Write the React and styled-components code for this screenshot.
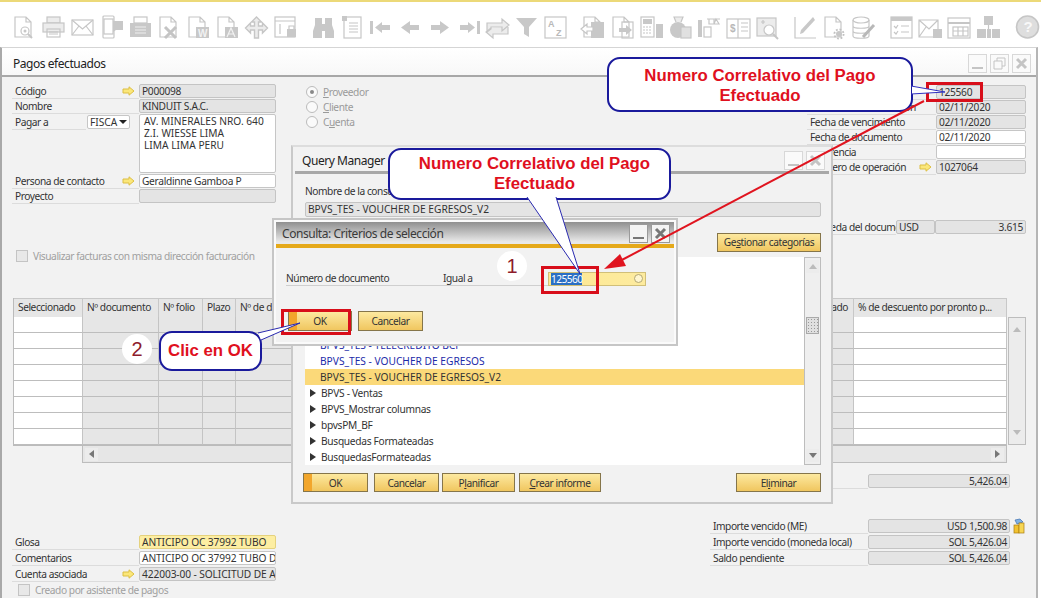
import React from 'react';
import styled, { createGlobalStyle } from 'styled-components';

const Global = createGlobalStyle`
  html, body { margin: 0; padding: 0; background: #fff; }
  body { font-family: "Noto Sans", "Liberation Sans", sans-serif; font-size: 10.2px; line-height: 14px; letter-spacing: -0.45px; color: #333; }
  * { box-sizing: border-box; }
`;

const Page = styled.div`
  position: relative; width: 1041px; height: 598px; overflow: hidden; background: #fff;
  border-top: 2px solid #ecd978;
`;

const Toolbar = styled.div`
  display: flex; align-items: center; height: 45px; padding: 5px 0 0 10px;
`;
const ToolGroup = styled.div`
  display: flex; margin-right: ${p => p.$gap ?? 9}px;
`;
const ToolSvg = styled.svg`
  width: 29px; height: 26px; flex: none; fill: none; stroke: #c6c6c6; stroke-width: 1.2;
  .f { fill: #c8c8c8; stroke: none; }
  .l { fill: #ececec; }
  text { fill: #b8b8b8; stroke: none; font-family: "Liberation Sans", sans-serif; font-weight: 700; letter-spacing: 0; }
`;

const page = "M5 3h11l5 5v15H5z M16 3v5h5";
const icons = [
  <><path d={page}/><circle cx="15" cy="17" r="4"/><circle cx="15" cy="17" r="1.5" className="f"/><path d="M18 20l4 4" strokeWidth="2"/></>,
  <><rect x="8" y="3" width="13" height="6" className="l"/><rect x="4" y="9" width="21" height="9" className="l"/><rect x="8" y="15" width="13" height="8"/><path d="M10 18h9M10 20h9"/></>,
  <><rect x="4" y="6" width="21" height="15"/><path d="M4 6l10.5 9L25 6M4 21l7-9M25 21l-7-9"/></>,
  <><rect x="6" y="2" width="11" height="22" rx="1"/><rect x="7" y="5" width="9" height="15" fill="#fff"/><path d="M16 7h10v9h-7l-3 2z" className="f"/></>,
  <><rect x="8" y="3" width="13" height="6"/><rect x="4" y="9" width="21" height="14" className="f"/><path d="M9 13h11M9 16h11M9 19h11" stroke="#eee"/></>,
  <><path d={page}/><path d="M10 13l11 11M21 13L10 24" strokeWidth="3" stroke="#c4c4c4"/></>,
  <><path d={page}/><rect x="12" y="13" width="13" height="11" className="f"/><text x="14" y="23" fontSize="10" style={{fill:'#f2f2f2'}}>W</text></>,
  <><path d={page}/><rect x="12" y="13" width="13" height="11" className="f"/><path d="M14 23l4-9 4 9M15 20h6" stroke="#f2f2f2"/></>,
  <><path d="M14.5 3l5 5h-3v4h4V9l5 5-5 5v-3h-4v8h-4v-8h-4v3l-5-5 5-5v3h4V8h-3z" className="l" strokeWidth="1.4"/></>,
  <><rect x="4" y="3" width="20" height="20"/><path d="M4 7h20M9 10v10" /><rect x="16" y="15" width="9" height="8" className="f"/><path d="M18 15v-3h5v3"/></>,
  <><path d="M6 4h7v6h3V4h7v7l2 6v7h-9v-7h-3v7H4v-7l2-6z" className="f"/></>,
  <><rect x="6" y="3" width="17" height="21"/><rect x="4" y="2" width="5" height="5" className="f"/><path d="M11 9h9M11 12h9M11 15h9M11 18h9"/></>,
  <><rect x="3" y="7" width="3" height="13" className="f"/><path d="M8 13.5L15 8v3h8v5h-8v3z" className="f"/></>,
  <><path d="M5 13.5L14 7v4h9v5h-9v4z" className="f"/></>,
  <><path d="M24 13.5L15 7v4H6v5h9v4z" className="f"/></>,
  <><rect x="23" y="7" width="3" height="13" className="f"/><path d="M21 13.5L14 8v3H6v5h8v3z" className="f"/></>,
  <><path d="M4 18V9h15V5l7 6-7 6v-4H8v2z M25 13v7H10v4l-7-6 5-4" className="l"/></>,
  <><path d="M4 4h21l-8 9v10l-5-3v-7z" className="f"/></>,
  <><rect x="4" y="3" width="21" height="21"/><text x="7" y="13" fontSize="9">A</text><text x="15" y="22" fontSize="9">Z</text></>,
  <><path d={page}/><rect x="12" y="8" width="13" height="16" className="f"/><path d="M2 15l6-5v3h6v4H8v3z" fill="#fff"/></>,
  <><path d={page}/><rect x="14" y="8" width="11" height="16"/><path d="M24 16l-6-5v3h-7v4h7v3z" className="f"/></>,
  <><rect x="4" y="3" width="13" height="20"/><rect x="6" y="5" width="9" height="5" className="f"/><path d="M6 13h9M6 16h9M6 19h9" strokeDasharray="2 1"/><rect x="19" y="10" width="7" height="14" className="f"/></>,
  <><circle cx="12" cy="16" r="8" className="f"/><path d="M10 8l-2-5h9l-2 5" className="l"/><rect x="15" y="13" width="10" height="11" fill="#e0e0e0"/></>,
  <><rect x="3" y="6" width="4" height="17" className="f"/><rect x="9" y="13" width="7" height="10"/><path d="M12 5h13M19 5v5M14 5v5h6M21 5l-2 5h5z"/></>,
  <><rect x="3" y="5" width="23" height="19"/><path d="M14 5v19M17 9h7M17 13h7M17 17h7"/><text x="6" y="18" fontSize="10">$</text></>,
  <><rect x="4" y="4" width="19" height="18" className="l"/><path d="M8 8h4M10 6v4"/><circle cx="16" cy="16" r="5" fill="#fff"/><path d="M20 20l5 5" strokeWidth="2"/></>,
  <><path d="M4 3v21h21"/><path d="M9 20l3-1 12-13-2-3L10 16z" className="f"/></>,
  <><path d={page}/><circle cx="19" cy="20" r="3" className="f"/><circle cx="19" cy="20" r="4.6" strokeWidth="1.8" strokeDasharray="1.8 1.8" stroke="#c0c0c0"/></>,
  <><ellipse cx="12" cy="6" rx="8" ry="3"/><path d="M4 6v16c0 3 16 3 16 0V6M4 12c0 3 16 3 16 0M4 17c0 3 16 3 16 0"/><path d="M14 23l11-12" strokeWidth="3" stroke="#b8b8b8"/></>,
  <><rect x="4" y="3" width="21" height="21"/><path d="M4 3h21v4H4z" className="f"/><path d="M7 12l2 2 2-3M7 18l2 2 2-3M14 12h8M14 18h8"/></>,
  <><path d="M3 6h19v17H3zM3 6l10 9 9-9M3 23l7-10"/><rect x="17" y="15" width="9" height="9" className="f"/></>,
  <><rect x="3" y="4" width="22" height="20"/><path d="M3 9h22" strokeWidth="2"/><rect x="8" y="13" width="15" height="9"/><path d="M13 13v9M18 13v9M8 17h15"/></>,
  <><rect x="10" y="2" width="9" height="9" className="f"/><rect x="3" y="15" width="9" height="9" className="f"/><rect x="18" y="15" width="8" height="9" className="f"/><rect x="13" y="15" width="4" height="9" className="f"/><path d="M14.5 11v4"/></>,
  <><circle cx="14.5" cy="13" r="11" strokeWidth="1.6" fill="#dedede"/><text x="10.5" y="18" fontSize="15" style={{fill:'#f8f8f8'}}>?</text></>,
];

const groups = [
  { n: 10, gap: 9 }, { n: 9, gap: 9 }, { n: 7, gap: 9 }, { n: 3, gap: 9 }, { n: 4, gap: 10 }, { n: 1, gap: 0 },
];

const MainWindow = styled.div`
  width: 1038px; height: 551px; background: #f2f2f2;
  border-left: 2px solid #a9a9a9; border-right: 2px solid #b5b5b5; border-top: 1px solid #d5d5d5;
  display: flex; flex-direction: column;
`;
const TitleBar = styled.div`
  display: flex; align-items: center; justify-content: space-between; flex: none;
  height: 29px; padding: 3px 5px 0 11px; background: linear-gradient(#fff, #f8f8f8);
  border-bottom: 2px solid #a8a8a8;
`;
const TitleText = styled.span`
  font-size: 12px; color: ${p => p.$color ?? '#222'}; white-space: nowrap; padding-top: ${p => p.$pt ?? 0}px;
`;
const Controls = styled.div`
  display: flex; gap: 3px;
`;
const Ctl = styled.svg`
  width: 19px; height: 19px; background: ${p => p.$solid ? '#f4f4f4' : '#fafafa'};
  border: 1px solid ${p => p.$solid ? '#9a9a9a' : '#d8d8d8'}; fill: none;
  stroke: ${p => p.$solid ? '#777' : '#c4c4c4'}; stroke-width: 1.6;
`;
const MinIcon = <path d="M3 13h11" strokeWidth="2" />;
const MaxIcon = <path d="M3 6h8v8H3zM6 6V3h8v8h-3" strokeWidth="1" />;
const XIcon = <path d="M4 4l9 9M13 4l-9 9" strokeWidth="3" />;

const Form = styled.div`
  flex: 1; padding: 7px 10px 0 10px; display: flex; flex-direction: column;
`;
const TopRow = styled.div`
  display: flex; height: 214px; flex: none;
`;
const LeftCol = styled.div`
  width: 264px; flex: none; display: flex; flex-direction: column;
`;
const RadioCol = styled.div`
  margin-left: 30px; flex: 1; padding-top: 1px; display: flex; flex-direction: column; gap: 2px;
`;
const Radio = styled.label`
  display: flex; align-items: center; gap: 5px; height: 13px; color: #9a9a9a;
`;
const RadioDot = styled.span`
  width: 12px; height: 12px; border-radius: 50%; border: 1px solid #bbb; background: #fafafa; display: flex;
  align-items: center; justify-content: center;
  &::after { content: ""; width: 4px; height: 4px; border-radius: 50%; background: ${p => p.$on ? '#888' : 'transparent'}; }
`;
const U = styled.span`
  text-decoration: underline;
`;
const RightCol = styled.div`
  width: 219px; flex: none; display: flex; flex-direction: column; padding-top: 1px;
`;
const Row = styled.div`
  display: flex; height: ${p => p.$h ?? 15}px; flex: none; margin-top: ${p => p.$top ?? 0}px;
`;
const Label = styled.div`
  flex: 1; min-width: 0; display: flex; align-items: center; justify-content: space-between;
  border-bottom: 1px solid #dcdcdc; white-space: nowrap; overflow: hidden; padding: 0 4px 1px 3px;
  height: 15px;
`;
const Field = styled.div`
  width: ${p => p.$w ?? 137}px; height: 14px; flex: none; line-height: 12px; padding: 0 2px;
  letter-spacing: ${p => p.$caps ? '-0.1px' : '-0.3px'};
  border: 1px solid ${p => p.$kind === 'white' ? '#c6c6c6' : p.$kind === 'yellow' ? '#e5d27e' : '#c4c4c4'}; border-radius: 2px;
  background: ${p => p.$kind === 'white' ? '#fff' : p.$kind === 'yellow' ? '#fdeea2' : '#e4e4e4'};
  text-align: ${p => p.$right ? 'right' : 'left'}; white-space: nowrap; overflow: hidden; color: #333;
`;
const Lnk = styled.svg`
  width: 13px; height: 10px; flex: none; fill: #fbe77a; stroke: #dcbf45; stroke-width: 1;
`;
const Arrow = () => <Lnk viewBox="0 0 13 10"><path d="M1 3h6V.8L12 5 7 9.2V7H1z" /></Lnk>;
const AddressRow = styled.div`
  display: flex; height: 59px; flex: none; margin-bottom: 1px;
`;
const AddressLabel = styled.div`
  flex: 1; display: flex; align-items: flex-start; justify-content: space-between; padding: 1px 9px 0 0;
`;
const PayLabel = styled.div`
  width: 74px; height: 15px; padding-left: 3px; border-bottom: 1px solid #dcdcdc;
`;
const Select = styled.div`
  width: 43px; height: 14px; background: #fff; border: 1px solid #c6c6c6; border-radius: 2px; padding-left: 2px;
  line-height: 12px; display: flex; justify-content: space-between; align-items: center; padding-right: 2px; letter-spacing: 0;
  &::after { content: ""; border: 4px solid transparent; border-top: 4px solid #222; border-bottom: 0; }
`;
const Address = styled.div`
  width: 137px; height: 59px; background: #fff; border: 1px solid #c6c6c6; border-radius: 2px;
  padding: 0 4px; line-height: 12px; white-space: pre-line; letter-spacing: 0;
`;
const CheckRow = styled.div`
  display: flex; align-items: center; gap: 5px; color: #a0a0a0; white-space: nowrap;
  margin-top: ${p => p.$top ?? 0}px; margin-left: ${p => p.$left ?? 4}px;
`;
const Box = styled.span`
  width: 12px; height: 12px; border: 1px solid #c4c4c4; background: #e8e8e8; flex: none;
`;

const TableWrap = styled.div`
  display: flex; align-items: flex-start; flex: none; margin-left: 1px;
`;
const Grid = styled.div`
  display: grid; width: 994px;
  grid-template-columns: 69px 76px 44px 33px 80px 1fr 110px 153px;
  grid-template-rows: 19px repeat(8, 16px);
  border-left: 1px solid #bbb; border-bottom: 1px solid #bbb;
`;
const Head = styled.div`
  background: #e6e6e6; border-right: 1px solid #c8c8c8; border-top: 1px solid #c8c8c8;
  padding: 1px ${p => p.$right ? 5 : 4}px 0 4px; white-space: nowrap; overflow: hidden; color: #333;
  text-align: ${p => p.$right ? 'right' : 'left'};
`;
const Cell = styled.div`
  background: ${p => p.$open ? '#fff' : '#e6e6e6'}; border-bottom: 1px solid #bdbdbd; border-right: 1px solid #c4c4c4;
`;
const VBar = styled.div`
  width: 18px; height: 128px; background: #ececec; border: 1px solid #bdbdbd; margin-left: 1px; margin-top: 19px;
  display: flex; flex-direction: column; justify-content: space-between; align-items: center; padding: 5px 0;
  flex: none;
`;
const HBar = styled.div`
  width: 925px; height: 17px; margin-left: 70px; flex: none; border: 1px solid #bdbdbd; border-top: 0;
  background: #e6e6e6; display: flex; justify-content: space-between; align-items: center; padding: 0 2px;
`;
const ArrBtn = styled.div`
  width: ${p => p.$w ?? 13}px; height: ${p => p.$h ?? 13}px; background: #ececec; display: flex; align-items: center; justify-content: center;
  &::after {
    content: ""; border: 4px solid transparent;
    ${p => p.$dir === 'left' && 'border-right: 5px solid #777; border-left: 0;'}
    ${p => p.$dir === 'right' && 'border-left: 5px solid #777; border-right: 0;'}
    ${p => p.$dir === 'up' && 'border-bottom: 5px solid #bbb; border-top: 0;'}
    ${p => p.$dir === 'down' && 'border-top: 5px solid #777; border-bottom: 0;'}
    ${p => p.$dir === 'downl' && 'border-top: 5px solid #bbb; border-bottom: 0;'}
  }
`;
const Bottom = styled.div`
  flex: 1; display: flex; justify-content: space-between; padding-right: 16px; align-items: flex-start;
`;
const BottomLeft = styled.div`
  width: 264px; padding-top: 72px; display: flex; flex-direction: column;
`;
const BottomRight = styled.div`
  width: 300px; padding-top: 11px; display: flex; flex-direction: column; position: relative;
`;
const Coins = styled.svg`
  position: absolute; left: 302px; top: 55px; width: 16px; height: 16px;
`;

/* Overlapping windows: free canvas */
const QueryWindow = styled.div`
  position: absolute; left: 291px; top: 143px; width: 542px; height: 359px; background: #f2f2f2;
  border: 2px solid #c9c9c9; border-top-color: #ddd; padding: 0 2px; display: flex; flex-direction: column;
`;
const WinTitle = styled.div`
  flex: none; height: 27px; display: flex; align-items: center; justify-content: space-between;
  border-bottom: 3px solid #a8a8a8; padding: 3px 4px 0 7px;
`;
const QBody = styled.div`
  flex: 1; padding: 10px 8px 0 10px; display: flex; flex-direction: column;
`;
const QField = styled.div`
  height: 15px; background: #e4e4e4; border: 1px solid #c4c4c4; border-radius: 2px; padding: 0 2px; line-height: 13px;
  margin-top: 4px; width: 100%; color: #333; letter-spacing: 0;
`;
const QRow = styled.div`
  display: flex; justify-content: flex-end; gap: 6px; margin-top: 16px; height: 18px; align-items: center;
`;
const GoldBtn = styled.div`
  height: ${p => p.$h ?? 19}px; width: ${p => p.$w}px; margin-left: ${p => p.$ml ?? 0}px;
  display: flex; align-items: center; justify-content: center; flex: none;
  background: linear-gradient(#fde9a0, #f0c65f);
  ${p => p.$default && 'background: linear-gradient(90deg, #f2a62c 8px, transparent 8px), linear-gradient(#fde9a0, #f0c65f);'}
  border: 1px solid #85754a; color: #333; white-space: nowrap;
`;
const ListWrap = styled.div`
  display: flex; height: 208px; margin-top: 6px; flex: none;
`;
const TreeList = styled.div`
  flex: 1; background: #fff; padding-top: 80px; display: flex; flex-direction: column;
`;
const ListItem = styled.div`
  height: 16px; line-height: 15px; padding-left: ${p => p.$tree ? '5px' : '15px'}; display: flex; align-items: center; gap: 5px;
  letter-spacing: ${p => p.$tree ? '-0.3px' : '0'};
  color: ${p => p.$blue ? '#1c2aa8' : '#333'}; background: ${p => p.$sel ? '#fbd979' : 'transparent'}; flex: none;
  &::before { content: ""; display: ${p => p.$tree ? 'block' : 'none'}; border: 4px solid transparent; border-left: 6px solid #333; border-right: 0; }
`;
const QScroll = styled.div`
  width: 17px; background: #efefef; border: 1px solid #bdbdbd; display: flex; flex-direction: column;
  justify-content: space-between; align-items: center; padding: 2px 0; position: relative;
`;
const Thumb = styled.div`
  position: absolute; top: 59px; left: 1px; width: 13px; height: 17px; background: #e0e0e0; border: 1px solid #aaa;
  background-image: radial-gradient(#999 0.7px, transparent 0.8px); background-size: 3px 3px;
`;
const QButtons = styled.div`
  display: flex; margin-top: 8px; margin-left: -2px;
`;
const Spacer = styled.div`
  flex: 1;
`;

const ConsultaWindow = styled.div`
  position: absolute; left: 272px; top: 216px; width: 406px; height: 128px; background: #fafafa;
  border: 2px solid #c6c6c6; padding: 2px; display: flex; flex-direction: column;
`;
const ConTitle = styled.div`
  flex: none; height: 26px; background: linear-gradient(#8f8f8f, #e9e9e9 90%);
  border-bottom: 4px solid #e5a91a; display: flex; align-items: center; justify-content: space-between;
  padding: 0 4px 0 6px;
`;
const ConBody = styled.div`
  flex: 1; padding: 23px 28px 0 10px; display: flex; flex-direction: column; background: #f2f2f2;
`;
const CritRow = styled.div`
  display: flex; align-items: center; height: 15px;
`;
const CritLabel = styled.div`
  width: 157px; white-space: nowrap; border-bottom: 1px solid #cfcfcf; height: 15px;
`;
const CritOp = styled.div`
  width: 105px; white-space: nowrap; border-bottom: 1px solid #cfcfcf; height: 15px;
`;
const CritField = styled.div`
  width: 98px; height: 14px; border: 1px solid #d1bf78; background: linear-gradient(90deg,#fde892,#fdeb9f);
  display: flex; align-items: center; justify-content: space-between; padding: 0 2px; line-height: 12px;
`;
const Selected = styled.span`
  background: #2b6fc4; color: #fff; letter-spacing: -0.6px;
`;
const Lookup = styled.span`
  width: 9px; height: 9px; border-radius: 50%; background: #fff6cf; border: 1px solid #b3a774; flex: none;
`;
const ConButtons = styled.div`
  display: flex; gap: 6px; margin-top: 25px; margin-left: 2px; align-items: center;
`;

const RedBox = styled.div`
  position: absolute; left: ${p => p.$x}px; top: ${p => p.$y}px; width: ${p => p.$w}px; height: ${p => p.$h}px;
  border: 3px solid #d80e1a;
`;
const Callout = styled.div`
  position: absolute; left: ${p => p.$x}px; top: ${p => p.$y}px; width: ${p => p.$w}px; height: ${p => p.$h}px;
  padding: ${p => p.$pt ?? 0}px 0 0 ${p => p.$pl ?? 0}px;
  background: #fff; border: 2px solid #1a1a9c; border-radius: 13px;
  display: flex; align-items: center; justify-content: center; text-align: center; letter-spacing: 0;
  font: 700 16.8px/20px "Liberation Sans", Arial, sans-serif; color: #e0101e; white-space: pre-line;
`;
const Badge = styled.div`
  position: absolute; left: ${p => p.$x}px; top: ${p => p.$y}px; width: 30px; height: 30px; border-radius: 50%;
  background: #fff; display: flex; align-items: center; justify-content: center; letter-spacing: 0;
  font: 400 20px "Liberation Sans", Arial, sans-serif; color: #8e1c2c;
`;
const Overlay = styled.svg`
  position: absolute; left: 0; top: -2px; width: 1041px; height: 598px; pointer-events: none;
`;

const rows = Array.from({ length: 8 });
const heads = ['Seleccionado', 'Nº documento', 'Nº folio', 'Plazo', 'Nº de documento', '', 'Pago total aplicado', '% de descuento por pronto p...'];

export default function App() {
  let k = 0;
  return (
    <Page>
      <Global />
      <Toolbar>
        {groups.map((g, i) => (
          <ToolGroup key={i} $gap={g.gap}>
            {Array.from({ length: g.n }).map(() => {
              const n = k++;
              return <ToolSvg key={n} viewBox="0 0 29 26">{icons[n]}</ToolSvg>;
            })}
          </ToolGroup>
        ))}
      </Toolbar>

      <MainWindow>
        <TitleBar>
          <TitleText $pt={2}>Pagos efectuados</TitleText>
          <Controls>
            <Ctl viewBox="0 0 17 17">{MinIcon}</Ctl>
            <Ctl viewBox="0 0 17 17">{MaxIcon}</Ctl>
            <Ctl viewBox="0 0 17 17">{XIcon}</Ctl>
          </Controls>
        </TitleBar>
        <Form>
          <TopRow>
            <LeftCol>
              <Row><Label>Código <Arrow /></Label><Field>P000098</Field></Row>
              <Row><Label>Nombre</Label><Field>KINDUIT S.A.C.</Field></Row>
              <AddressRow>
                <AddressLabel>
                  <PayLabel>Pagar a</PayLabel>
                  <Select>FISCA</Select>
                </AddressLabel>
                <Address>{'AV. MINERALES NRO. 640\nZ.I. WIESSE LIMA\nLIMA LIMA PERU'}</Address>
              </AddressRow>
              <Row><Label>Persona de contacto <Arrow /></Label><Field $kind="white">Geraldinne Gamboa P</Field></Row>
              <Row><Label>Proyecto</Label><Field /></Row>
              <CheckRow $top={45}><Box />Visualizar facturas con misma dirección facturación</CheckRow>
            </LeftCol>
            <RadioCol>
              <Radio><RadioDot $on /><span><U>P</U>roveedor</span></Radio>
              <Radio><RadioDot /><span><U>C</U>liente</span></Radio>
              <Radio><RadioDot /><span>C<U>u</U>enta</span></Radio>
            </RadioCol>
            <RightCol>
              <Row><Label>Número</Label><Field $w={90}>125560</Field></Row>
              <Row><Label>Fecha de contabilización</Label><Field $w={90}>02/11/2020</Field></Row>
              <Row><Label>Fecha de vencimiento</Label><Field $w={90}>02/11/2020</Field></Row>
              <Row><Label>Fecha de documento</Label><Field $w={90} $kind="white">02/11/2020</Field></Row>
              <Row><Label>Referencia</Label><Field $w={90} $kind="white" /></Row>
              <Row><Label>Número de operación <Arrow /></Label><Field $w={90}>1027064</Field></Row>
              <Row $top={45}>
                <Label>Moneda del documento</Label>
                <Field $w={39}>USD</Field>
                <Field $w={91} $right>3.615</Field>
              </Row>
            </RightCol>
          </TopRow>

          <TableWrap>
            <Grid>
              {heads.map((h, i) => <Head key={i} $right={i === 6}>{h}</Head>)}
              {rows.map((_, r) => heads.map((h, c) => <Cell key={`${r}-${c}`} $open={c === 0 || c === 7} />))}
            </Grid>
            <VBar>
              <ArrBtn $dir="up" />
              <ArrBtn $dir="downl" />
            </VBar>
          </TableWrap>
          <HBar>
            <ArrBtn $dir="left" />
            <ArrBtn $dir="right" />
          </HBar>

          <Bottom>
            <BottomLeft>
              <Row $h={16}><Label>Glosa</Label><Field $caps $kind="yellow">ANTICIPO OC 37992 TUBO</Field></Row>
              <Row $h={16}><Label>Comentarios</Label><Field $caps $kind="white">ANTICIPO OC 37992 TUBO D</Field></Row>
              <Row $h={16}><Label>Cuenta asociada <Arrow /></Label><Field $caps>422003-00 - SOLICITUD DE A</Field></Row>
              <CheckRow $left={6}><Box />Creado por asistente de pagos</CheckRow>
            </BottomLeft>
            <BottomRight>
              <Row><Label>Total</Label><Field $w={142} $right>5,426.04</Field></Row>
              <Row $top={30} $h={16}><Label>Importe vencido (ME)</Label><Field $w={142} $right>USD 1,500.98</Field></Row>
              <Row $h={16}><Label>Importe vencido (moneda local)</Label><Field $w={142} $right>SOL 5,426.04</Field></Row>
              <Row $h={16}><Label>Saldo pendiente</Label><Field $w={142} $right>SOL 5,426.04</Field></Row>
              <Coins viewBox="0 0 16 16">
                <path d="M3 2l5-1 3 3-6 2z" fill="#7fb2e5" stroke="#3d6fae" strokeWidth=".7" />
                <rect x="2" y="7" width="5" height="8" fill="#f2c230" stroke="#a97d10" strokeWidth=".7" />
                <rect x="7" y="5" width="5" height="10" fill="#f7d653" stroke="#a97d10" strokeWidth=".7" />
              </Coins>
            </BottomRight>
          </Bottom>
        </Form>
      </MainWindow>

      <QueryWindow>
        <WinTitle>
          <TitleText>Query Manager</TitleText>
          <Controls>
            <Ctl viewBox="0 0 17 17">{MinIcon}</Ctl>
            <Ctl viewBox="0 0 17 17">{XIcon}</Ctl>
          </Controls>
        </WinTitle>
        <QBody>
          <div>Nombre de la consulta</div>
          <QField>BPVS_TES - VOUCHER DE EGRESOS_V2</QField>
          <QRow>
            <GoldBtn $w={104}>Ge<U>s</U>tionar categorías</GoldBtn>
          </QRow>
          <ListWrap>
            <TreeList>
              <ListItem $blue>BPVS_TES - TELECREDITO BCP</ListItem>
              <ListItem $blue>BPVS_TES - VOUCHER DE EGRESOS</ListItem>
              <ListItem $sel>BPVS_TES - VOUCHER DE EGRESOS_V2</ListItem>
              <ListItem $tree>BPVS - Ventas</ListItem>
              <ListItem $tree>BPVS_Mostrar columnas</ListItem>
              <ListItem $tree>bpvsPM_BF</ListItem>
              <ListItem $tree>Busquedas Formateadas</ListItem>
              <ListItem $tree>BusquedasFormateadas</ListItem>
            </TreeList>
            <QScroll>
              <ArrBtn $dir="up" />
              <Thumb />
              <ArrBtn $dir="down" />
            </QScroll>
          </ListWrap>
          <QButtons>
            <GoldBtn $w={65} $default>OK</GoldBtn>
            <GoldBtn $w={65} $ml={6}>Cancelar</GoldBtn>
            <GoldBtn $w={73} $ml={3}>P<U>l</U>anificar</GoldBtn>
            <GoldBtn $w={82} $ml={4}><U>C</U>rear informe</GoldBtn>
            <Spacer />
            <GoldBtn $w={85}>El<U>i</U>minar</GoldBtn>
          </QButtons>
        </QBody>
      </QueryWindow>

      <ConsultaWindow>
        <ConTitle>
          <TitleText $color="#3a3a3a" $pt={1}>Consulta: Criterios de selección</TitleText>
          <Controls>
            <Ctl viewBox="0 0 17 17" $solid>{MinIcon}</Ctl>
            <Ctl viewBox="0 0 17 17" $solid>{XIcon}</Ctl>
          </Controls>
        </ConTitle>
        <ConBody>
          <CritRow>
            <CritLabel>Número de documento</CritLabel>
            <CritOp>Igual a</CritOp>
            <CritField><Selected>125560</Selected><Lookup /></CritField>
          </CritRow>
          <ConButtons>
            <GoldBtn $w={64} $h={20} $default>OK</GoldBtn>
            <GoldBtn $w={65} $h={20}>Cancelar</GoldBtn>
          </ConButtons>
        </ConBody>
      </ConsultaWindow>

      <RedBox $x={926} $y={80} $w={57} $h={20} />
      <RedBox $x={541} $y={264} $w={58} $h={28} />
      <RedBox $x={281} $y={307} $w={70} $h={26} />

      <Callout $x={607} $y={55} $w={306} $h={55} $pt={3}>{'Numero Correlativo del Pago\nEfectuado'}</Callout>
      <Callout $x={388} $y={146} $w={283} $h={52} $pl={10}>{'Numero Correlativo del Pago\nEfectuado'}</Callout>
      <Callout $x={159} $y={329} $w={103} $h={40}>Clic en OK</Callout>
      <Badge $x={497} $y={249}>1</Badge>
      <Badge $x={122} $y={332}>2</Badge>

      <Overlay viewBox="0 0 1041 598">
        <polygon points="912,86 945,92 912,94" fill="#fff" />
        <path d="M911 86L945 92L911 94" fill="none" stroke="#3030c0" strokeWidth="1" />
        <polygon points="527,197 580,274 556,197" fill="#fff" />
        <path d="M527 197L580 274L556 197" fill="none" stroke="#2a2ab0" strokeWidth="1" />
        <polygon points="258,333 300,323 261,340" fill="#fff" />
        <path d="M258 333L300 323L261 340" fill="none" stroke="#2a2ab0" strokeWidth="1" />
        <path d="M924 101L618 262" stroke="#e0141f" strokeWidth="2" />
        <polygon points="604,269 620,254 626,266" fill="#e0141f" />
      </Overlay>
    </Page>
  );
}
